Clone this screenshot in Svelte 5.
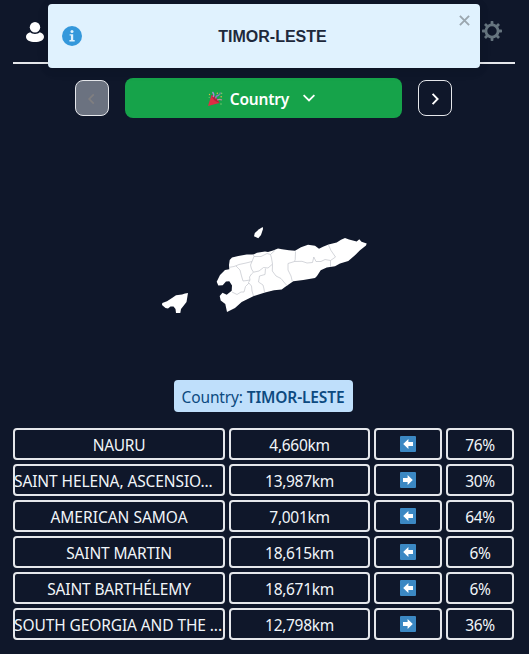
<script>
  const guesses = [
    { name: 'NAURU', km: '4,660km', dir: 'left', pct: '76%', ls: -0.3 },
    { name: 'SAINT HELENA, ASCENSIO...', km: '13,987km', dir: 'right', pct: '30%', ls: -0.1, cut: true },
    { name: 'AMERICAN SAMOA', km: '7,001km', dir: 'left', pct: '64%', ls: 0 },
    { name: 'SAINT MARTIN', km: '18,615km', dir: 'left', pct: '6%', ls: -0.15 },
    { name: 'SAINT BARTHÉLEMY', km: '18,671km', dir: 'left', pct: '6%', ls: -0.15 },
    { name: 'SOUTH GEORGIA AND THE ...', km: '12,798km', dir: 'right', pct: '36%', ls: -0.1, cut: true },
  ];
</script>

<div class="page">
  <header>
    <svg class="user" width="18" height="20" viewBox="0 0 18 20"><circle cx="9" cy="5.2" r="5.2" fill="#fff" /><path d="M4.3 10.3C6 12.5 12 12.5 13.7 10.3C16.4 11.1 18 12.8 18 14.7C18 18 14 20 9 20S0 18 0 14.7C0 12.8 1.6 11.1 4.3 10.3Z" fill="#fff" /></svg>
    <svg class="gear" width="20" height="20" viewBox="0 0 20 20">
      <circle cx="10" cy="10" r="6.1" fill="none" stroke="#66757f" stroke-width="2.8" />
      {#each [0, 45, 90, 135, 180, 225, 270, 315] as a}
        <rect x="8.6" y="0" width="2.8" height="3.6" rx=".7" fill="#66757f" transform="rotate({a} 10 10)" />
      {/each}
    </svg>
  </header>

  <nav>
    <button class="step disabled" aria-label="Previous"><svg width="16" height="16" viewBox="0 0 16 16"><path d="M9.8 3.4L5.2 8L9.8 12.6" fill="none" stroke="#807f80" stroke-width="1.7" /></svg></button>
    <button class="round">
      <svg width="16" height="16" viewBox="0 0 16 16">
        <path d="M1 15L4.5 4Q10 6 12.5 12Z" fill="#dd2e44" />
        <path d="M4.5 4Q5 9 12.5 12Q10 6 4.5 4Z" fill="#b51f38" />
        <path d="M6 6Q7.8 3.5 5.5 1" fill="none" stroke="#aa8dd8" stroke-width="1.3" />
        <path d="M8.5 7.5Q9 4.5 12 4Q13.5 3.5 13 1.5" fill="none" stroke="#8c7bc0" stroke-width="1.3" />
        <path d="M10 9Q12.5 7.8 15 9" fill="none" stroke="#c08a9e" stroke-width="1.1" />
        <g fill="#d6bd45"><circle cx="10.3" cy="2.2" r=".8" /><circle cx="14.2" cy="5.8" r=".8" /><circle cx="2.5" cy="3.5" r=".7" /></g>
        <g fill="#73c96a"><circle cx="14.6" cy="2.4" r=".8" /><circle cx="14" cy="13" r=".8" /><circle cx="2.2" cy="6.5" r=".6" /></g>
      </svg>
      <b>Country</b>
      <svg class="down" width="12" height="8" viewBox="0 0 12 8"><path d="M.6 1.1L6 6.4L11.4 1.1" fill="none" stroke="#fff" stroke-width="1.8" /></svg>
    </button>
    <button class="step" aria-label="Next"><svg width="16" height="16" viewBox="0 0 16 16"><path d="M5.6 2.9L10.6 8L5.6 13.1" fill="none" stroke="#fff" stroke-width="1.9" /></svg></button>
  </nav>

  <svg class="map" viewBox="160 220 210 100" width="210" height="100">
    <g fill="#fff">
      <path d="M262.7 227L263 229L261 235L258.3 238.3L254 236.2L254.8 233L259 229.3Z" />
      <path d="M188 293L187.5 296L186.5 302L183 306.5L181 309L180.3 313L176 313L175.5 309L173.5 306.5L170.5 306.5L168 308.5L165.5 308L162 305L162.3 303L167 301.3L172 298L176 295.3L182 294.5L185 293.5Z" />
      <path d="M229 265L229.7 260L232 257.5L238.3 256L246.7 254.5L253.5 254.5L257 252.7L265 251.5L268 252L273 250.5L278 248.5L282 249.3L289 250.3L295 250.8L301 247.3L308 244.8L315 245.8L319 248.7L323 246.8L328.5 244.5L336.7 242.5L341 239.8L345 238L349 239.5L356.7 241.5L359.3 239.3L361.5 241.8L366.7 243.5L366 245.5L360 250.2L355 255.2L348.3 260.9L340 263.5L335 266.2L326.7 267.5L320.7 270.2L317 276L315 277.9L303.3 279.9L293.3 281.2L285 286.9L281.7 289.5L274 290.2L265 292.5L253.3 296.2L241.7 301.9L235 307.9L227 312L225.3 304L220.7 300.5L219.7 296L222.5 292.7L226.7 294.7L231.7 290.7L232 285.5L229.3 281.3L226 281.6L222.7 285.3L218.3 285.5L216.7 281.7L220 275L225 270L229.3 269.3Z" />
    </g>
    <g fill="none" stroke="#bcc0c7" stroke-width=".65" stroke-linejoin="round">
      <path d="M229.5 267.3L234 266.5L239 264.5L246 263L252 261.5L254 256.5L253 254" />
      <path d="M236 266L240 270L241.5 276L243 281L247 280.5L250 280L249.5 277L251.5 274L253.5 272.2L251.5 269L250.5 265L252 261.5" />
      <path d="M254 256.5L261 256.5L267 253.5L270.5 254.5L275 250.3" />
      <path d="M270.5 254.5L271.5 258L272.5 264L272.3 271L276 276L281 278.5L285.5 284L287 285.5" />
      <path d="M253.5 272.2L259 271L263.5 267.5L268 268L272 264.5M265.5 268.5L265 274.5L259.5 276L258.5 282L263 285L264 289L264.5 292.5" />
      <path d="M250 280L248.5 282.5L251.5 286L252 291L253.5 296M232 292L237 294.5L241 292L244 292L245.5 286.5L249 283" />
      <path d="M295.5 251.5L295.2 259.5L294.5 261.5L288 263.5L288 270L291 276L292.2 281" />
      <path d="M294.5 261.5L302 261.3L307 263L312.5 262.5L313.8 257L316 261.5L321 261.5L325 259.5L330.5 260.5L335.5 257L331 250.5L328.5 245M330.5 260.5L330.5 266.8" />
    </g>
  </svg>

  <div class="answer"><p>Country: <b>TIMOR-LESTE</b></p></div>

  <div class="table">
    {#each guesses as g}
      <div class="cell name" class:cut={g.cut}><span style="letter-spacing: {g.ls}px">{g.name}</span></div>
      <div class="cell">{g.km}</div>
      <div class="cell">
        <svg class="arrow" width="16" height="16" viewBox="0 0 16 16">
          <rect width="16" height="16" rx="1" fill="#3b88c3" />
          <path d="M3.2 8L8.4 3V5.9H13V10.1H8.4V13Z" fill="#fff" transform={g.dir === 'right' ? 'matrix(-1 0 0 1 16 0)' : undefined} />
        </svg>
      </div>
      <div class="cell pct">{g.pct}</div>
    {/each}
  </div>
</div>

<div class="toast">
  <svg width="20" height="20" viewBox="0 0 20 20"><circle cx="10" cy="10" r="10" fill="#3498db" /><circle cx="10" cy="5.6" r="1.5" fill="#e0f2fe" /><path d="M7.6 8.2H11.2V14H12.7V15.5H7.4V14H8.9V9.6H7.6Z" fill="#e0f2fe" /></svg>
  <span>TIMOR-LESTE</span>
  <svg class="close" width="11" height="11" viewBox="0 0 11 11"><path d="M.9 .9L10.1 10.1M10.1 .9L.9 10.1" stroke="#9ba7af" stroke-width="1.9" /></svg>
</div>

<style>
  :global(body) { background: #0f172a; }
  .page {
    box-sizing: border-box;
    height: 654px;
    padding: 0 14px 0 13px;
    overflow: hidden;
    background: #0f172a;
    color: #f1f5f9;
    font: 15.5px/24px "Noto Sans", "Open Sans", sans-serif;
    display: flex;
    flex-direction: column;
  }
  header {
    box-sizing: border-box;
    height: 64px;
    flex: none;
    border-bottom: 2px solid #e5e7eb;
    padding: 21px 13px 0 13px;
    display: flex;
    justify-content: space-between;
  }
  .user { margin-top: 1px; }
  nav {
    display: flex;
    align-items: center;
    justify-content: center;
    gap: 16px;
    height: 40px;
    margin: 14px 2px 0 0;
  }
  button {
    box-sizing: border-box;
    border: 0;
    padding: 0;
    display: flex;
    align-items: center;
    justify-content: center;
    color: #fff;
    font: inherit;
  }
  .step { width: 34px; height: 36px; border: 1px solid #e5e7eb; border-radius: 8px; background: transparent; }
  .step svg { margin-top: 1px; }
  .disabled { background: #6b7280; }
  .round { width: 277px; height: 40px; padding-right: 4px; border-radius: 8px; background: #16a34a; }
  .round b { margin: 2px 0 0 7px; font-size: 15.5px; font-weight: 600; letter-spacing: -0.2px; }
  .round > svg:first-child { margin-top: 2px; }
  .down { margin-left: 14px; }
  .map { display: block; margin: 102px 0 0 147px; flex: none; }
  .answer { display: flex; justify-content: center; margin-top: 60px; }
  .answer p {
    box-sizing: border-box;
    width: 179px;
    height: 32px;
    margin: 0 2px 0 0;
    padding: 5px 0 0;
    border-radius: 4px;
    background: #bfdffb;
    color: #0c4a80;
    line-height: 24px;
    text-align: center;
    white-space: nowrap;
    letter-spacing: -0.14px;
  }
  .answer b { font-weight: 600; }
  .table {
    display: grid;
    grid-template-columns: 212px 141px 68px 68px;
    grid-auto-rows: 32px;
    gap: 4px;
    margin-top: 16px;
  }
  .cell {
    box-sizing: border-box;
    border: 2px solid #e5e7eb;
    border-radius: 4px;
    display: flex;
    align-items: center;
    justify-content: center;
    padding-top: 2px;
    white-space: nowrap;
    letter-spacing: -0.3px;
    min-width: 0;
  }
  .cut { justify-content: flex-start; }
  .cut span { margin-left: -1px; }
  .pct { letter-spacing: -0.4px; }
  .arrow { margin-top: -2px; }
  .toast {
    box-sizing: border-box;
    position: absolute;
    left: 48px;
    top: 4px;
    width: 432px;
    height: 64px;
    padding: 0 14px;
    border-radius: 4px;
    background: #e0f2fe;
    box-shadow: 0 1px 10px rgba(0, 0, 0, .1), 0 2px 15px rgba(0, 0, 0, .05);
    color: #1e293b;
    display: flex;
    align-items: center;
    font: bold 16px/24px "Liberation Sans", Arial, sans-serif;
  }
  .toast span { flex: 1; text-align: center; padding: 2px 3px 0 0; }
  .close { position: absolute; right: 10px; top: 11px; }
</style>
